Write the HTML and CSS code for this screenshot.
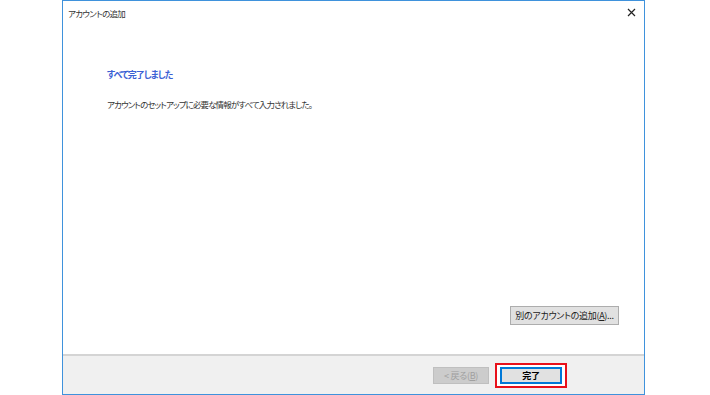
FILE: index.html
```html
<!DOCTYPE html>
<html lang="ja">
<head>
    <meta charset="UTF-8">
    <meta name="viewport" content="width=device-width, initial-scale=1.0">
    <title>アカウントの追加</title>
    <link rel="stylesheet" href="styles.css">
</head>
<body>
    <div class="window">
        <div class="titlebar">
            <span class="title">アカウントの追加</span>
            <span class="close">
                <svg width="9" height="9" viewBox="0 0 9 9">
                    <path d="M1 1 L8 8 M8 1 L1 8" stroke="#222" stroke-width="1.2" fill="none"/>
                </svg>
            </span>
        </div>

        <div class="main">
            <h2 class="heading">すべて完了しました</h2>
            <p class="message">アカウントのセットアップに必要な情報がすべて入力されました。</p>

            <div class="extra">
                <button class="btn btn-add">別のアカウントの追加(<u>A</u>)...</button>
            </div>
        </div>

        <div class="footer">
            <button class="btn btn-back" disabled>&lt; 戻る(<u>B</u>)</button>
            <div class="highlight">
                <button class="btn btn-finish">完了</button>
            </div>
        </div>
    </div>
</body>
</html>
```

FILE: styles.css
```css
body {
    margin: 0;
    background-color: white;
    font-family: "Noto Sans CJK JP", "Noto Sans", sans-serif;
    font-size: 8.5px;
    letter-spacing: -0.7px;
    font-feature-settings: "palt";
    color: #333;
}
.window {
    box-sizing: border-box;
    margin-left: 62px;
    width: 583px;
    height: 395px;
    border: 1px solid #3f92dc;
    display: flex;
    flex-direction: column;
    background-color: white;
}
.titlebar {
    height: 24px;
    display: flex;
    align-items: center;
    justify-content: space-between;
    padding: 0 8px 0 5px;
}
.title {
    color: #333;
    line-height: 12px;
}
.close {
    display: flex;
    margin-top: -2px;
}
.main {
    flex: 1;
    display: flex;
    flex-direction: column;
    padding: 0 25px 29px 44px;
}
.heading {
    margin: 43px 0 0 0;
    font-size: 9px;
    font-weight: bold;
    letter-spacing: -1px;
    color: #3a60d4;
    line-height: 14px;
}
.message {
    margin: 15px 0 0 0;
    line-height: 14px;
    color: #333;
    letter-spacing: -0.9px;
}
.extra {
    margin-top: auto;
    display: flex;
    justify-content: flex-end;
}
.btn {
    box-sizing: border-box;
    font-family: inherit;
    font-size: 9px;
    letter-spacing: -0.3px;
    font-feature-settings: "palt";
    padding: 0;
    margin: 0;
    background-color: #e1e1e1;
    border: 1px solid #adadad;
    color: #222;
    line-height: 1;
}
.btn u {
    text-underline-offset: 1px;
}
.btn-add {
    width: 109px;
    height: 19px;
}
.footer {
    height: 37px;
    border-top: 2px solid #d4d4d4;
    background-color: #f0f0f0;
    display: flex;
    align-items: center;
    justify-content: flex-end;
    padding: 1px 77px 0 0;
}
.btn-back {
    width: 56px;
    height: 17px;
    background-color: #cccccc;
    border-color: #bfbfbf;
    color: #a0a0a0;
}
.highlight {
    margin-left: 6px;
    padding: 2px 3px;
    border: 2px solid #e8101a;
    background-color: white;
    display: flex;
}
.btn-finish {
    width: 62px;
    height: 17px;
    border: 2px solid #0078d7;
    color: #000;
    font-weight: bold;
}
```
